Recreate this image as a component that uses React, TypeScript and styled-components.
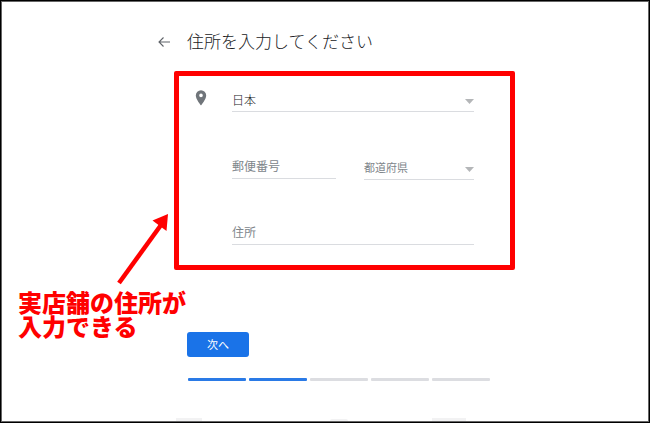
import React from "react";
import styled, { createGlobalStyle } from "styled-components";

const GlobalStyle = createGlobalStyle`
  *, *::before, *::after { box-sizing: border-box; }
  body {
    margin: 0;
    background: #fff;
    font-family: "Noto Sans CJK JP", "Noto Sans", sans-serif;
  }
  button, input, select { font-family: inherit; }
`;

const Page = styled.div`
  display: flex;
  flex-direction: column;
  min-height: 100vh;
  border: 1px solid #000;
  box-shadow: inset 0 0 0 1px #666;
  overflow: hidden;
`;

const Column = styled.main`
  flex: 1;
  width: 100%;
  max-width: 380px;
  margin: 0 auto;
`;

const Header = styled.header`
  display: flex;
  align-items: center;
  gap: 15px;
  padding: 28px 0 0 21px;
`;

const BackButton = styled.button`
  display: flex;
  padding: 0;
  border: 0;
  background: none;
  color: #5f6368;
  cursor: pointer;
`;

const Title = styled.h1`
  margin: 0;
  font-size: 17px;
  line-height: 24px;
  font-weight: 300;
  color: #202124;
`;

const Panel = styled.section`
  position: relative;
  display: flex;
  gap: 23px;
  margin: 18px 0 0 39px;
  padding: 11px 36px 20px 14px;
  border: 5px solid #f00;
  border-radius: 2px;
`;

const PinIcon = styled.svg`
  flex: none;
  width: 16px;
  height: 20px;
  margin-top: 1px;
  fill: #70757a;
`;

const Fields = styled.form`
  flex: 1;
  min-width: 0;
  display: grid;
  gap: 40px;
`;

const FieldRow = styled.div`
  display: grid;
  grid-template-columns: 104fr 110fr;
  gap: 28px;
  margin-top: 2px;
`;

const TextField = styled.input`
  width: 100%;
  min-width: 0;
  height: 25px;
  padding: 0 0 2px;
  border: 0;
  border-bottom: 1px solid #dadce0;
  border-radius: 0;
  background: none;
  font-size: 12px;
  color: #3c4043;
  outline: none;
  &::placeholder { color: #80868b; opacity: 1; }
`;

const SelectWrap = styled.div<{ $offset?: boolean }>`
  display: flex;
  align-items: center;
  height: 25px;
  margin-top: ${(p) => (p.$offset ? "1px" : "0")};
  border-bottom: 1px solid #dadce0;
`;

const Select = styled.select<{ $muted?: boolean }>`
  flex: 1;
  min-width: 0;
  padding: 0;
  border: 0;
  background: none;
  appearance: none;
  outline: none;
  font-size: ${(p) => (p.$muted ? "11px" : "12px")};
  font-weight: ${(p) => (p.$muted ? 400 : 300)};
  color: ${(p) => (p.$muted ? "#80868b" : "#202124")};
`;

const Caret = styled.svg`
  flex: none;
  width: 9px;
  height: 5px;
  margin-top: 5px;
  fill: #b4b6b8;
  pointer-events: none;
`;

const Note = styled.p`
  position: absolute;
  top: 214px;
  left: -161px;
  margin: 0;
  font-size: 24px;
  line-height: 24px;
  font-weight: 900;
  white-space: nowrap;
  color: #f00;
`;

const Arrow = styled.svg`
  position: absolute;
  top: 136px;
  left: -63px;
  width: 54px;
  height: 74px;
`;

const Actions = styled.div`
  padding: 62px 25px 0 52px;
`;

const NextButton = styled.button`
  display: block;
  width: 62px;
  height: 25px;
  padding: 0 0 2px;
  border: 0;
  border-radius: 3px;
  background: #1a73e8;
  color: #fff;
  font-size: 11px;
  cursor: pointer;
`;

const Progress = styled.div`
  display: flex;
  gap: 3px;
  margin: 21px 0 0 1px;
`;

const Step = styled.span<{ $done: boolean }>`
  flex: 1;
  height: 3px;
  border-radius: 1px;
  background: ${(p) => (p.$done ? "#2a7ae6" : "#dcdde1")};
`;

const FooterEdge = styled.footer`
  display: grid;
  grid-template-columns: 154fr 102fr 42fr;
  align-items: end;
  width: 100%;
  max-width: 298px;
  margin: 0 auto;
  padding-bottom: 1px;
`;

const FooterMark = styled.span<{ $width: number; $round?: boolean }>`
  width: ${(p) => p.$width}px;
  height: ${(p) => (p.$round ? 2 : 3)}px;
  border-radius: ${(p) => (p.$round ? "8px 8px 0 0" : "0")};
  background: #f2f2f3;
`;

const DropCaret = () => (
  <Caret viewBox="0 0 9 5" aria-hidden="true">
    <path d="M0 0h9L4.5 5z" />
  </Caret>
);

export default function App() {
  return (
    <>
      <GlobalStyle />
      <Page>
        <Column>
          <Header>
            <BackButton type="button" aria-label="戻る">
              <svg width="16" height="16" viewBox="0 0 16 16" fill="none" stroke="currentColor" strokeWidth="1.1">
                <path d="M14 9H3M7.500 4.500L3 9l4.500 4.500" />
              </svg>
            </BackButton>
            <Title>住所を入力してください</Title>
          </Header>
          <Panel>
            <PinIcon viewBox="0 0 16 20" aria-hidden="true">
              <path fillRule="evenodd" d="M8 2.200a5.200 5.200 0 0 0-5.200 5.200C2.800 11.300 8 17.300 8 17.300s5.200-6 5.200-9.900A5.200 5.200 0 0 0 8 2.200zm0 3.400a1.800 1.800 0 1 1 0 3.600 1.800 1.800 0 0 1 0-3.600z" />
            </PinIcon>
            <Fields id="address" onSubmit={(e) => e.preventDefault()}>
              <SelectWrap>
                <Select aria-label="国" defaultValue="jp">
                  <option value="jp">日本</option>
                </Select>
                <DropCaret />
              </SelectWrap>
              <FieldRow>
                <TextField aria-label="郵便番号" placeholder="郵便番号" />
                <SelectWrap $offset>
                  <Select $muted aria-label="都道府県" defaultValue="">
                    <option value="">都道府県</option>
                  </Select>
                  <DropCaret />
                </SelectWrap>
              </FieldRow>
              <TextField aria-label="住所" placeholder="住所" />
            </Fields>
            <Arrow viewBox="0 0 54 74" aria-hidden="true">
              <path d="M3 71L45 13" stroke="#f00" strokeWidth="4.500" />
              <path d="M52 2L50.500 19 36.500 8.500z" fill="#f00" />
            </Arrow>
            <Note>
              実店舗の住所が
              <br />
              入力できる
            </Note>
          </Panel>
          <Actions>
            <NextButton type="submit" form="address">次へ</NextButton>
            <Progress role="progressbar" aria-label="進行状況" aria-valuemin={0} aria-valuemax={5} aria-valuenow={2}>
              {[1, 2, 3, 4, 5].map((n) => (
                <Step key={n} $done={n <= 2} />
              ))}
            </Progress>
          </Actions>
        </Column>
        <FooterEdge>
          <FooterMark $width={26} />
          <FooterMark $width={18} $round />
          <FooterMark $width={34} />
        </FooterEdge>
      </Page>
    </>
  );
}
